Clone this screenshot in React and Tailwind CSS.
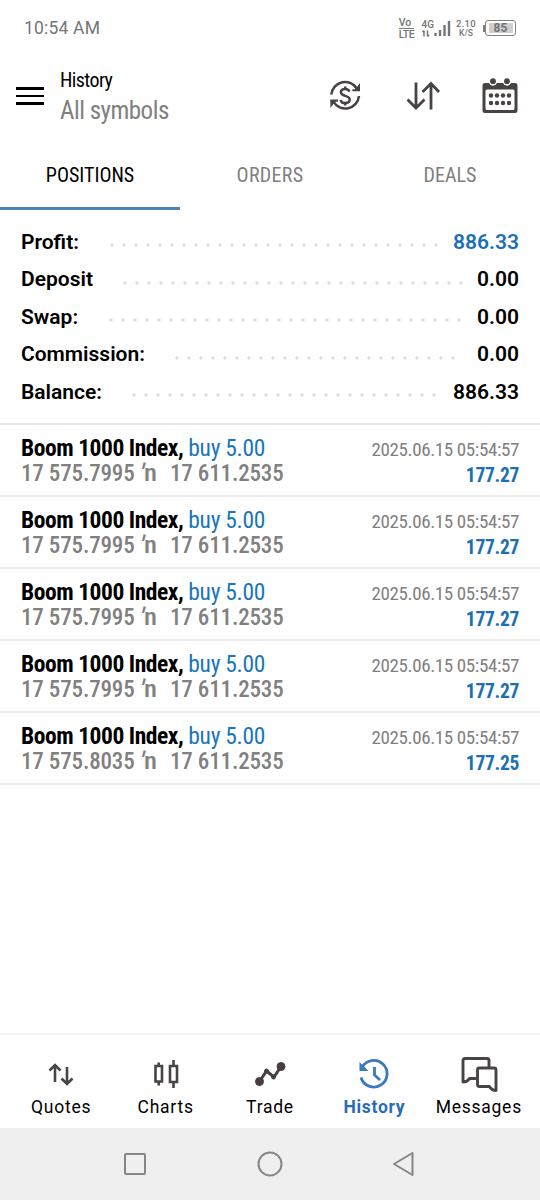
const tabs = ['POSITIONS', 'ORDERS', 'DEALS'];

const summary = [
    { label: 'Profit:', value: '886.33', color: 'text-[#1a70b8]', labelWidth: 'w-[85px]', end: 'mr-[10px]' },
    { label: 'Deposit', value: '0.00', color: 'text-black', labelWidth: 'w-[98px]', end: 'mr-[8px]' },
    { label: 'Swap:', value: '0.00', color: 'text-black', labelWidth: 'w-[84px]', end: 'mr-[10px]' },
    { label: 'Commission:', value: '0.00', color: 'text-black', labelWidth: 'w-[150px]', end: 'mr-[16px]' },
    { label: 'Balance:', value: '886.33', color: 'text-black', labelWidth: 'w-[107px]', end: 'mr-[10px]' }
];

const positions = [
    { open: '17 575.7995', close: '17 611.2535', profit: '177.27' },
    { open: '17 575.7995', close: '17 611.2535', profit: '177.27' },
    { open: '17 575.7995', close: '17 611.2535', profit: '177.27' },
    { open: '17 575.7995', close: '17 611.2535', profit: '177.27' },
    { open: '17 575.8035', close: '17 611.2535', profit: '177.25' }
];

function StatusBar() {
    return (
        <div className="flex h-14 shrink-0 items-center justify-between pl-6 pr-[24px] text-[#757575]">
            <span className="text-[17.5px] tracking-[0.2px]">10:54 AM</span>
            <div className="flex items-center font-medium">
                <div className="mr-[7px] flex flex-col items-center text-[10.5px] leading-[9px]">
                    <span className="w-full border-b border-[#808080] pb-px">Vo</span>
                    <span className="pt-px tracking-[-0.3px]">LTE</span>
                </div>
                <div className="mr-[5px] flex items-end">
                    <div className="flex flex-col">
                        <span className="text-[10px] leading-[11px]">4G</span>
                        <svg width="9" height="7" viewBox="0 0 9 7" fill="none" stroke="currentColor" strokeWidth="1.5">
                            <path d="M3 6.5v-6M1.500 2 3 .5M6.500.5v6M6.500 6.500 8 5" />
                        </svg>
                    </div>
                    <svg width="17" height="18" viewBox="0 0 17 18" fill="none" stroke="currentColor" strokeWidth="2.4">
                        <path d="M1.500 17v-3M6 17v-6M10.500 17V6M15 17V2" />
                    </svg>
                </div>
                <div className="mr-[7px] flex flex-col items-center text-[9.5px] leading-[10px]">
                    <span className="tracking-[0.3px]">2.10</span>
                    <span className="text-[8.5px] leading-[9px]">K/S</span>
                </div>
                <div className="flex items-center">
                    <span className="h-[7px] w-[2px] bg-[#808080]" />
                    <div className="flex h-[16px] w-[31px] items-center justify-center rounded-[3px] border-[1.5px] border-[#808080]">
                        <span className="flex h-[10px] w-[24px] items-center justify-center bg-[#cfcfcf] text-[12px] font-bold leading-none">85</span>
                    </div>
                </div>
            </div>
        </div>
    );
}

function CurrencyIcon() {
    return (
        <svg width="32" height="32" viewBox="-1 0 32 32" fill="none" stroke="#484242" strokeWidth="2.5">
            <path d="M1.4 14.5A13.7 13.7 0 0 1 27 9M29 16A13.7 13.7 0 0 1 3.400 21.500" />
            <path d="M30 3v8h-7.500v-1.500H25ZM.4 28v-8h7.500v1.500H5.400Z" fill="#484242" stroke="none" />
            <path d="M22.500 10.300H30M.4 20.500h7.500" strokeWidth="1.8" />
            <path d="M19.500 11.600c-.6-1.800-2.200-2.700-4.300-2.700-2.500 0-4.300 1.300-4.300 3.400 0 4.700 8.800 2.500 8.800 7.300 0 2.200-1.900 3.500-4.500 3.500-2.400 0-4.200-1.100-4.600-3.200M15.200 6.500v3M15.200 22.500v3" />
        </svg>
    );
}

function SortIcon() {
    return (
        <svg width="34" height="30" viewBox="0 0 34 30" fill="none" stroke="#484242" strokeWidth="2.8">
            <path d="M10 1.500v26M1.500 18.500 10 27l8.500-8.500M25 28.500v-26M16.500 11 25 2.500l8 8.500" />
        </svg>
    );
}

function CalendarIcon() {
    return (
        <svg width="36" height="36" viewBox="0 0 36 36" fill="#484242">
            <path fillRule="evenodd" d="M3 5h4a4.300 4.300 0 0 0 8 0h6a4.300 4.300 0 0 0 8 0h4a2.500 2.500 0 0 1 2.500 2.500v25A2.500 2.500 0 0 1 33 35H3a2.500 2.500 0 0 1-2.500-2.500v-25A2.500 2.500 0 0 1 3 5Zm2 6.500A1.500 1.500 0 0 0 3.500 13v17.500A1.500 1.500 0 0 0 5 32h26a1.500 1.500 0 0 0 1.500-1.500V13a1.500 1.500 0 0 0-1.500-1.500Z" />
            <circle cx="11" cy="3.2" r="2.9" />
            <circle cx="25" cy="3.2" r="2.9" />
            {[9, 15, 21, 27].map((x) => (
                <g key={x}>
                    <circle cx={x} cy="17.5" r="2.2" />
                    <circle cx={x} cy="25" r="2.2" />
                </g>
            ))}
        </svg>
    );
}

function Header() {
    return (
        <div className="flex h-[84px] shrink-0 items-center pl-4 pr-[22px]">
            <div className="mt-[-4px] flex w-7 flex-col gap-[5px]">
                <span className="h-[2.5px] bg-black" />
                <span className="h-[2.5px] bg-black" />
                <span className="h-[2.5px] bg-black" />
            </div>
            <div className="ml-4 mt-[-3px] flex-1 font-['Roboto_Condensed',Roboto,sans-serif]">
                <div className="text-[20px] leading-[28px] tracking-[-0.6px]">History</div>
                <div className="text-[25px] leading-[33px] tracking-[-0.5px] text-[#808080]">All symbols</div>
            </div>
            <div className="mt-[-4px] flex items-center">
                <CurrencyIcon />
                <div className="ml-[45px] mr-[42px]"><SortIcon /></div>
                <CalendarIcon />
            </div>
        </div>
    );
}

function Tabs() {
    return (
        <div className="grid h-[70px] shrink-0 grid-cols-3 font-['Roboto_Condensed',Roboto,sans-serif] text-[20px]">
            {tabs.map((tab, i) => (
                <div key={tab} className={i === 0 ? 'flex items-center justify-center border-b-[3px] border-[#4a83b5] pt-[3px]' : 'flex items-center justify-center border-b-[3px] border-transparent pt-[3px] text-[#808080]'}>
                    <span className={i === 1 ? 'tracking-[0.3px]' : ''}>{tab}</span>
                </div>
            ))}
        </div>
    );
}

function Summary() {
    return (
        <div className="flex h-[215px] shrink-0 flex-col border-b-2 border-[#e8e8e8] px-[21px] pt-[13.5px] text-[21px] font-semibold">
            {summary.map((row) => (
                <div key={row.label} className="flex h-[37.5px] items-center">
                    <span className={`shrink-0 ${row.labelWidth}`}>{row.label}</span>
                    <span className={`mt-[6px] h-[4px] flex-1 bg-[radial-gradient(circle,#dcdcdc_1.3px,transparent_1.9px)] bg-[length:12px_4px] ${row.end}`} />
                    <span className={row.color}>{row.value}</span>
                </div>
            ))}
        </div>
    );
}

function Position({ open, close, profit }) {
    return (
        <div className="flex h-[72px] shrink-0 justify-between border-b-2 border-[#ebebeb] px-[21px] pt-[10px] font-['Roboto_Condensed',Roboto,sans-serif]">
            <div>
                <div className="text-[23.5px] leading-[26px]">
                    <span className="font-bold tracking-[-0.45px]">Boom 1000 Index,</span>
                    <span className="ml-[5px] tracking-[-0.3px] text-[#1a75b8]">buy 5.00</span>
                </div>
                <div className="flex text-[23px] font-medium leading-[26px] tracking-[-0.15px] text-[#808080]">
                    <span className="w-[119px]">{open}</span>
                    <span className="flex w-[30px]">
                        <span className="mt-[-1px] skew-x-[-12deg] text-[26px]">′</span>
                        <span className="origin-left scale-x-115">n</span>
                    </span>
                    <span>{close}</span>
                </div>
            </div>
            <div className="text-right">
                <div className="pt-[2px] text-[19px] leading-[25px] tracking-[-0.37px] text-[#808080]">2025.06.15 05:54:57</div>
                <div className="text-[19.5px] font-bold leading-[27px] tracking-[-0.3px] text-[#1a70b0]">{profit}</div>
            </div>
        </div>
    );
}

function QuotesIcon() {
    return (
        <svg width="26" height="24" viewBox="0 0 26 24" fill="none" stroke="#484444" strokeWidth="2.6">
            <path d="M7 20V3.500M1.500 8.500 7 3l5.500 5.500M19 5v17M13.500 16.500l5.500 5.500 5.500-5.500" />
        </svg>
    );
}

function ChartsIcon() {
    return (
        <svg width="26" height="30" viewBox="0 0 26 30" fill="none" stroke="#484444" strokeWidth="2.6">
            <path d="M2.500 7h6.500v15.500H2.500ZM5.700 3.500v4M5.700 22v4.500M17 7h7v16h-7ZM20.500 1v6M20.500 23v6" />
        </svg>
    );
}

function TradeIcon() {
    return (
        <svg width="32" height="26" viewBox="0 0 32 26" fill="#484040" stroke="#484040">
            <path d="M5.500 20.500 12.500 10l7.500 6 7-10.500" fill="none" strokeWidth="3" />
            <circle cx="5.5" cy="20.5" r="4" />
            <circle cx="12.5" cy="10" r="2" />
            <circle cx="19.5" cy="16" r="2" />
            <circle cx="27" cy="5.5" r="4" />
        </svg>
    );
}

function HistoryIcon() {
    return (
        <svg width="32" height="32" viewBox="0 0 32 32" fill="none" stroke="#3a78c0" strokeWidth="2.8">
            <path d="M4 9.500A13.300 13.300 0 1 1 3 19.500" />
            <path d="M1.500 4v9h9Z" fill="#3a78c0" stroke="none" />
            <path d="M16.500 9v8l5.500 5" />
        </svg>
    );
}

function MessagesIcon() {
    return (
        <svg width="38" height="36" viewBox="0 0 38 36" fill="none" stroke="#484444" strokeWidth="2.9" strokeLinejoin="round">
            <path d="M16 22.500H9.500C8 25 6 26 3 26V4.500a2 2 0 0 1 2-2h22a2 2 0 0 1 2 2V11" />
            <path d="M19.500 12H34a2 2 0 0 1 2 2v20.500c-3.500 0-5-1.300-6.500-4h-10a2 2 0 0 1-2-2V14a2 2 0 0 1 2-2Z" />
        </svg>
    );
}

const navItems = [
    { label: 'Quotes', icon: QuotesIcon },
    { label: 'Charts', icon: ChartsIcon },
    { label: 'Trade', icon: TradeIcon },
    { label: 'History', icon: HistoryIcon, active: true },
    { label: 'Messages', icon: MessagesIcon }
];

function BottomNav() {
    return (
        <div className="mt-auto grid h-[95px] shrink-0 grid-cols-5 border-t-2 border-[#f5f5f5] px-[9px]">
            {navItems.map((item) => (
                <div key={item.label} className="flex flex-col items-center pt-[19px]">
                    <div className="flex h-10 items-center"><item.icon /></div>
                    <span className={item.active ? 'text-[17.5px] font-bold leading-[26px] tracking-[0.7px] text-[#2a6cb4]' : 'text-[17.5px] leading-[26px] tracking-[0.75px]'}>{item.label}</span>
                </div>
            ))}
        </div>
    );
}

function SystemBar() {
    return (
        <div className="flex h-[72px] shrink-0 items-center justify-center gap-[110px] bg-[#efefef]">
            <svg width="24" height="24" viewBox="0 0 24 24" fill="none" stroke="#868686" strokeWidth="2">
                <rect x="2" y="2" width="20" height="20" rx="1" />
            </svg>
            <svg width="26" height="26" viewBox="0 0 26 26" fill="none" stroke="#868686" strokeWidth="2">
                <circle cx="13" cy="13" r="11.5" />
            </svg>
            <svg width="24" height="26" viewBox="0 0 24 26" fill="none" stroke="#868686" strokeWidth="2" strokeLinejoin="round">
                <path d="M19.500 2v22L1 13Z" />
            </svg>
        </div>
    );
}

export default function App() {
    return (
        <div className="flex h-[1200px] w-[540px] flex-col bg-white font-['Roboto',sans-serif] text-black">
            <StatusBar />
            <Header />
            <Tabs />
            <Summary />
            {positions.map((position, i) => (
                <Position key={i} {...position} />
            ))}
            <BottomNav />
            <SystemBar />
        </div>
    );
}
